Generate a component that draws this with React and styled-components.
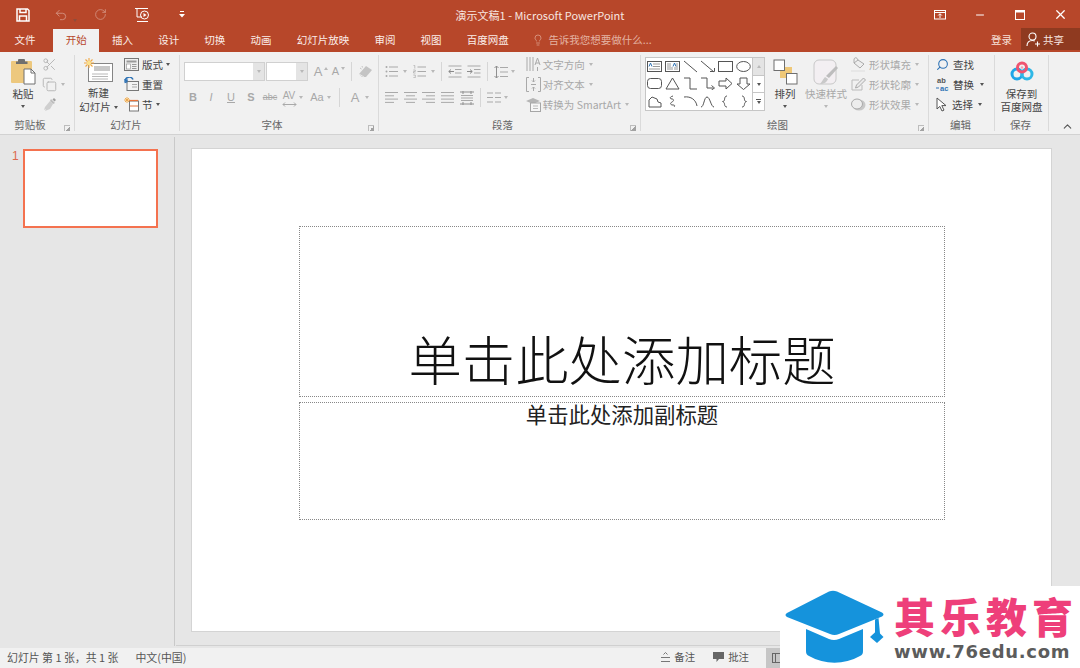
import React from 'react'
import styled, { createGlobalStyle } from 'styled-components'
import { Scissors, Copy, Search, Lightbulb, X, Minus, Undo2, RotateCw, ChevronUp } from 'lucide-react'

const CJK = '"Noto Sans CJK SC", "Noto Sans", sans-serif'

const Global = createGlobalStyle`
  html, body { margin: 0; padding: 0; height: 100%; overflow: hidden; }
  body { font-family: ${CJK}; background: #e6e6e6; }
  #root { height: 100%; }
  svg { display: block; flex: none; }
`

const Window = styled.div`
  position: relative;
  width: 1080px;
  height: 668px;
  display: flex;
  flex-direction: column;
  overflow: hidden;
`

/* title bar */
const TitleBar = styled.div`
  height: 29px;
  background: #b7472a;
  display: flex;
  align-items: center;
  color: #fff;
  flex: none;
`
const QuickAccess = styled.div`
  width: 360px;
  display: flex;
  align-items: center;
  padding-left: 16px;
  box-sizing: border-box;
`
const QuickBtn = styled.div`
  margin-left: ${p => p.$gap || 0}px;
  opacity: ${p => (p.$off ? 0.4 : 1)};
`
const TitleText = styled.div`
  width: 360px;
  text-align: center;
  font-size: 11px;
  color: #f7e6e0;
`
const WinButtons = styled.div`
  flex: 1;
  display: flex;
  align-items: center;
  justify-content: flex-end;
`
const WinBtn = styled.div`
  width: 40px;
  display: flex;
  justify-content: center;
`

/* tabs */
const TabBar = styled.div`
  height: 23px;
  background: #b7472a;
  display: flex;
  align-items: stretch;
  padding-left: 2px;
  flex: none;
`
const Tab = styled.div`
  padding: 0 12.6px;
  font-size: 10.5px;
  line-height: 21px;
  color: ${p => (p.$active ? '#b7472a' : '#fbeee9')};
  background: ${p => (p.$active ? '#f1f1f1' : 'transparent')};
  margin-left: ${p => p.$gap || 0}px;
  white-space: nowrap;
`
const TellMe = styled.div`
  display: flex;
  align-items: center;
  gap: 4px;
  margin-left: 11px;
  height: 21px;
  font-size: 10.5px;
  color: #e4b3a3;
`
const Login = styled.div`
  margin-left: auto;
  font-size: 10.5px;
  line-height: 21px;
  color: #f7e0d8;
  margin-right: 9px;
`
const Share = styled.div`
  width: 59px;
  height: 22px;
  background: #8f3a20;
  color: #f7e6e0;
  font-size: 10.5px;
  display: flex;
  align-items: center;
  gap: 2px;
  padding-left: 5px;
  box-sizing: border-box;
  margin-top: -1px;
`

/* ribbon */
const Ribbon = styled.div`
  height: 82px;
  background: #f1f1f1;
  border-bottom: 1px solid #d2d2d2;
  display: flex;
  flex: none;
`
const Group = styled.div`
  width: ${p => p.$w}px;
  box-sizing: border-box;
  margin: 3px 0;
  border-right: 1px solid #dadada;
  display: flex;
  flex-direction: column;
  position: relative;
  flex: none;
`
const GroupBody = styled.div`
  flex: 1;
  display: flex;
  padding-left: ${p => p.$pl || 0}px;
  min-height: 0;
`
const GroupLabel = styled.div`
  height: 13px;
  line-height: 13px;
  font-size: 10.5px;
  color: #666;
  text-align: center;
  padding-right: ${p => (p.$launch ? 14 : 2)}px;
`
const Launcher = styled.div`
  position: absolute;
  right: 4px;
  bottom: 0;
  width: 5px;
  height: 5px;
  border-left: 1px solid #bdbdbd;
  border-top: 1px solid #bdbdbd;
  background: linear-gradient(135deg, transparent 50%, #a2a2a2 50%);
`
const Large = styled.div`
  width: ${p => p.$w}px;
  display: flex;
  flex-direction: column;
  align-items: center;
  padding-top: ${p => p.$top || 3}px;
  margin-left: ${p => p.$ml || 0}px;
  font-size: 10.5px;
  line-height: 14px;
  color: ${p => (p.$off ? '#a8a8a8' : '#444')};
  white-space: nowrap;
  flex: none;
`
const LargeText = styled.div`
  display: flex;
  align-items: center;
  gap: 3px;
  margin-top: ${p => p.$mt || 0}px;
`
const Col = styled.div`
  display: flex;
  flex-direction: column;
  flex: none;
  margin-left: ${p => p.$ml || 0}px;
`
const SideCol = styled(Col)`
  margin-left: auto;
  margin-right: 11px;
`
const SmallRow = styled.div`
  height: 18px;
  padding-bottom: 2px;
  display: flex;
  align-items: center;
  gap: ${p => p.$gap ?? 3}px;
  font-size: 10.5px;
  color: ${p => (p.$off ? '#a8a8a8' : '#444')};
  white-space: nowrap;
`
const Caret = styled.span`
  display: inline-block;
  width: 0;
  height: 0;
  border-left: 2.5px solid transparent;
  border-right: 2.5px solid transparent;
  border-top: ${p => (p.$up ? 'none' : `3px solid ${p.$off ? '#b8b8b8' : '#555'}`)};
  border-bottom: ${p => (p.$up ? `3px solid ${p.$off ? '#b8b8b8' : '#555'}` : 'none')};
  margin-left: ${p => p.$ml || 0}px;
  margin-top: ${p => p.$mt || 0}px;
  flex: none;
`
const FontRow = styled.div`
  display: flex;
  align-items: center;
  height: 19px;
  margin-top: ${p => p.$mt || 0}px;
`
const Combo = styled.div`
  width: ${p => p.$w}px;
  height: 19px;
  background: #fff;
  border: 1px solid #d0d0d0;
  box-sizing: border-box;
  display: flex;
  justify-content: flex-end;
  margin-right: ${p => p.$mr || 0}px;
`
const ComboArrow = styled.div`
  width: 11px;
  background: #e4e4e4;
  display: flex;
  align-items: center;
  justify-content: center;
`
const Glyph = styled.div`
  width: ${p => p.$w || 18}px;
  text-align: center;
  font-family: "Liberation Sans", sans-serif;
  font-size: ${p => p.$size || 11}px;
  line-height: 13px;
  font-weight: ${p => (p.$bold ? 700 : 400)};
  font-style: ${p => (p.$italic ? 'italic' : 'normal')};
  text-decoration: ${p => (p.$under ? 'underline' : p.$strike ? 'line-through' : 'none')};
  color: #a8a8a8;
  margin-left: ${p => p.$ml || 0}px;
  flex: none;
`
const Spacing = styled.div`
  display: flex;
  flex-direction: column;
  align-items: center;
  width: 16px;
  margin-left: ${p => p.$ml || 0}px;
  flex: none;
`
const VSep = styled.div`
  width: 1px;
  height: ${p => p.$h || 19}px;
  background: #d6d6d6;
  margin: 0 ${p => p.$m || 4}px;
  flex: none;
`
const IconSlot = styled.div`
  margin-left: ${p => p.$ml || 0}px;
  flex: none;
`
const Gallery = styled.div`
  display: flex;
  height: 54px;
  margin-top: 2px;
`
const GalleryGrid = styled.div`
  width: 108px;
  box-sizing: border-box;
  background: #fff;
  border: 1px solid #c6c6c6;
  display: grid;
  grid-template-columns: repeat(6, 1fr);
  grid-template-rows: repeat(3, 1fr);
`
const GalleryCell = styled.div`
  display: flex;
  align-items: center;
  justify-content: center;
`
const GalleryScroll = styled.div`
  width: 12px;
  display: flex;
  flex-direction: column;
  border: 1px solid #c6c6c6;
  border-left: none;
  box-sizing: border-box;
`
const ScrollBtn = styled.div`
  flex: 1;
  background: ${p => (p.$off ? '#e4e4e4' : '#fff')};
  border-bottom: ${p => (p.$last ? 'none' : '1px solid #c6c6c6')};
  display: flex;
  flex-direction: column;
  gap: 1px;
  align-items: center;
  justify-content: center;
`
const ScrollBar = styled.div`
  width: 5px;
  height: 1px;
  background: #555;
`
const Collapse = styled.div`
  flex: 1;
  display: flex;
  align-items: flex-end;
  justify-content: flex-end;
  padding: 0 6px 1px 0;
`

/* main */
const Main = styled.div`
  flex: 1;
  display: flex;
  min-height: 0;
  background: #e6e6e6;
`
const Thumbs = styled.div`
  width: 175px;
  box-sizing: border-box;
  border-right: 1px solid #c9c9c9;
  margin: 2px 0;
  padding: 12px 0 0 12px;
  display: flex;
  flex: none;
`
const ThumbNumber = styled.div`
  width: 11px;
  font-family: "Liberation Sans", sans-serif;
  font-size: 12px;
  line-height: 14px;
  color: #dc6a4c;
`
const Thumb = styled.div`
  width: 135px;
  height: 79px;
  box-sizing: border-box;
  border: 2.5px solid #f4724f;
  background: #fff;
`
const Canvas = styled.div`
  flex: 1;
  box-sizing: border-box;
  padding: 13px 28px 14px 15px;
  border-bottom: 1px solid #d0d0d0;
  margin: 0 0 2px 1px;
`
const Slide = styled.div`
  width: 861px;
  height: 484px;
  box-sizing: border-box;
  background: #fff;
  border: 1px solid #d4d4d4;
  padding: 77px 106px 0 107px;
  display: flex;
  flex-direction: column;
  gap: 5px;
`
const TitleHolder = styled.div`
  height: 171px;
  box-sizing: border-box;
  border: 1px dotted #888;
  display: flex;
  align-items: flex-end;
  justify-content: center;
  font-size: 53.4px;
  font-weight: 300;
  line-height: 72px;
  color: #111;
  padding-bottom: 2px;
  white-space: nowrap;
`
const SubHolder = styled.div`
  height: 118px;
  box-sizing: border-box;
  border: 1px dotted #888;
  text-align: center;
  font-size: 21.4px;
  line-height: 22px;
  color: #222;
`

/* status */
const StatusBar = styled.div`
  height: 20px;
  background: #f1f1f1;
  display: flex;
  align-items: center;
  font-size: 10.9px;
  color: #555;
  padding: 0 0 3px 7px;
  box-sizing: border-box;
  flex: none;
`
const StatusItem = styled.div`
  display: flex;
  align-items: center;
  gap: 4px;
  margin-left: ${p => p.$ml || 0}px;
  white-space: nowrap;
`
const StatusAction = styled(StatusItem)`
  font-size: 10.4px;
`
const ViewBtn = styled.div`
  width: 32px;
  height: 20px;
  background: #c6c6c6;
  margin: 3px 0 0 17px;
  display: flex;
  align-items: center;
  padding-left: 6px;
  box-sizing: border-box;
`

/* watermark */
const Watermark = styled.div`
  position: absolute;
  right: 0;
  bottom: 0;
  width: 300px;
  height: 82px;
  background: #fff;
  display: flex;
  align-items: center;
`
const WatermarkCap = styled.div`
  margin-left: 5px;
`
const WatermarkText = styled.div`
  margin-left: 9px;
  display: flex;
  flex-direction: column;
`
const WatermarkName = styled.div`
  font-size: 41px;
  line-height: 46px;
  font-weight: 900;
  letter-spacing: 5px;
  color: #ee3f7a;
  white-space: nowrap;
  margin-bottom: 3px;
`
const WatermarkUrl = styled.div`
  font-family: "DejaVu Sans", sans-serif;
  font-size: 18px;
  line-height: 22px;
  font-weight: 700;
  letter-spacing: 0.7px;
  color: #5c5c5c;
  white-space: nowrap;
`

const G = '#a9a9a9'

const SaveIcon = () => (
  <svg width="14" height="14" viewBox="0 0 14 14" fill="none" stroke="#fff" strokeWidth="1.5">
    <path d="M1 1h10.5L13 2.5V13H1z" />
    <path d="M4 1v3.5h6V1M3.5 13V8h7v5" />
  </svg>
)
const PresentIcon = () => (
  <svg width="18" height="16" viewBox="0 0 18 16" fill="none" stroke="#fff" strokeWidth="1">
    <path d="M1 1.5h13M3 1.5V10h5" />
    <circle cx="10.5" cy="8" r="4" />
    <path d="M9.5 6l3 2-3 2z" fill="#fff" stroke="none" />
    <path d="M3 14.5h11" />
  </svg>
)
const QatMore = () => (
  <svg width="6" height="7" viewBox="0 0 6 7" fill="#fff">
    <rect x="1" y="0" width="4" height="1" />
    <path d="M0 3h6L3 6.5z" />
  </svg>
)
const DisplayIcon = () => (
  <svg width="12" height="10" viewBox="0 0 12 10" fill="none" stroke="#fff">
    <rect x=".5" y=".5" width="11" height="8.5" />
    <path d="M.5 2.5h11" />
    <path d="M6 8V4M4.2 5.5L6 3.7l1.8 1.8" />
  </svg>
)
const MaxIcon = () => (
  <svg width="10" height="10" viewBox="0 0 10 10" fill="none" stroke="#fff">
    <rect x=".5" y=".5" width="9" height="9" />
    <path d="M0 1.5h10" strokeWidth="2" />
  </svg>
)
const ShareIcon = () => (
  <svg width="15" height="15" viewBox="0 0 15 15" fill="none" stroke="#fff" strokeWidth="1.1">
    <circle cx="6.5" cy="4.5" r="3.5" />
    <path d="M1 14c0-3.5 2-5.5 5.5-5.5 1 0 1.6.2 2.3.5" />
    <path d="M11.5 9.5v5M9 12h5" />
  </svg>
)
const PasteIcon = () => (
  <svg width="26" height="27" viewBox="0 0 26 27">
    <rect x="1" y="3" width="21" height="22" rx="1" fill="#edc87e" />
    <path d="M8 3.5V2a1 1 0 011-1h5a1 1 0 011 1v1.5h2.5V6H6V3.5z" fill="#6f6f6f" />
    <path d="M14 11h7l4 4v11H14z" fill="#fff" stroke="#707070" />
    <path d="M21 11v4h4" fill="none" stroke="#707070" />
  </svg>
)
const BrushIcon = () => (
  <svg width="15" height="15" viewBox="0 0 15 15">
    <path d="M9 2l4 4-2 1-3-3z" fill="#bdbdbd" />
    <path d="M8 4l3 3-3 5-5 2 1-2-2 1 1-3z" fill="#cfcfcf" />
    <path d="M12 1l2 2-1.5 1.5-2-2z" fill="#9f9f9f" />
  </svg>
)
const NewSlideIcon = () => (
  <svg width="30" height="25" viewBox="0 0 30 25">
    <rect x="4.5" y="5.5" width="24" height="18" fill="#fff" stroke="#858585" />
    <rect x="10" y="8" width="16" height="5" fill="#c8c8c8" />
    <path d="M8 16h16M8 18.5h16M8 21h16" stroke="#b8b8b8" />
    <path d="M5 0v10M0 5h10M1.5 1.5l7 7M8.5 1.5l-7 7" stroke="#f0a640" strokeWidth="1.1" />
    <circle cx="5" cy="5" r="2.2" fill="#fbe08c" />
  </svg>
)
const LayoutIcon = () => (
  <svg width="15" height="13" viewBox="0 0 15 13" fill="none">
    <rect x=".5" y=".5" width="14" height="12" fill="#eee" stroke="#777" />
    <rect x="2.5" y="2.5" width="10" height="2" fill="#999" />
    <rect x="2.5" y="6" width="4" height="5" fill="#fff" stroke="#999" strokeWidth=".7" />
    <path d="M8 6.5h4.5M8 8.5h4.5M8 10.5h4.5" stroke="#999" />
  </svg>
)
const ResetIcon = () => (
  <svg width="15" height="14" viewBox="0 0 15 14" fill="none">
    <rect x="3" y="4.5" width="11.5" height="9" fill="#f4f4f4" stroke="#777" />
    <path d="M8 7.5h5M8 10h5" stroke="#aaa" />
    <path d="M1.5 6A4 4 0 019 2.5" stroke="#2f73b5" strokeWidth="1.6" />
    <path d="M0 2l4 .5-1 4z" fill="#2f73b5" />
  </svg>
)
const SectionIcon = () => (
  <svg width="15" height="15" viewBox="0 0 15 15" fill="none">
    <rect x="5.5" y="4" width="9" height="10" fill="#fff" stroke="#777" />
    <path d="M5 3.5h9" stroke="#e8743b" strokeWidth="1.2" />
    <path d="M6 9h8" stroke="#e8743b" />
    <path d="M3 0v6M0 3h6M1 1l4 4M5 1L1 5" stroke="#f0a640" strokeWidth=".9" />
  </svg>
)
const ClearFmt = () => (
  <svg width="15" height="15" viewBox="0 0 15 15">
    <path d="M1 10L8 2l6 4-6 7H4z" fill="#c4c4c4" />
    <path d="M1 10l5 3" stroke="#e9e9e9" />
    <path d="M2 4l1.5 1M4 2l.5 1.500" stroke="#c4c4c4" />
  </svg>
)
const SpaceArrow = () => (
  <svg width="15" height="5" viewBox="0 0 15 5" fill="none" stroke={G}>
    <path d="M1 2.5h13M3 .5l-2 2 2 2M12 .5l2 2-2 2" />
  </svg>
)
const Bullets = () => (
  <svg width="13" height="13" viewBox="0 0 13 13" stroke={G}>
    <path d="M4 2h9M4 6.5h9M4 11h9" />
    <circle cx="1.5" cy="2" r="1" fill={G} stroke="none" />
    <circle cx="1.5" cy="6.5" r="1" fill={G} stroke="none" />
    <circle cx="1.5" cy="11" r="1" fill={G} stroke="none" />
  </svg>
)
const Numbers = () => (
  <svg width="13" height="13" viewBox="0 0 13 13" stroke={G}>
    <path d="M4.5 2h8.5M4.5 6.5h8.5M4.5 11h8.5" />
    <path d="M.5.5h1.3v3M.3 5h2v1.5H.5V8h2M.3 10h2v2.700H.3" fill="none" strokeWidth=".7" />
  </svg>
)
const LineSpacing = () => (
  <svg width="14" height="14" viewBox="0 0 14 14" stroke={G} fill="none">
    <path d="M6 2.5h8M6 7h8M6 11.5h8" />
    <path d="M2.5 1v12M.5 3l2-2 2 2M.5 11l2 2 2-2" stroke="#8f8f8f" />
  </svg>
)
const Indent = ({ flip }) => (
  <svg width="14" height="13" viewBox="0 0 14 13" stroke={G} fill="none">
    <path d="M.5 1h13M.5 12h13M7 4.5h6.5M7 8h6.5" />
    {flip
      ? <path d="M0 6.5h5M3 4.5l2.300 2-2.300 2" stroke="#8a8a8a" />
      : <path d="M6 6.5H1M3 4.5l-2.300 2 2.300 2" stroke="#8a8a8a" />}
  </svg>
)
const Align = ({ lines }) => (
  <svg width="13" height="11" viewBox="0 0 13 11" stroke={G} fill="none">
    {lines.map((l, i) => <path key={i} d={`M${l[0]} ${i * 3.3 + 0.5}H${l[1]}`} />)}
  </svg>
)
const ColumnsIcon = () => (
  <svg width="14" height="14" viewBox="0 0 14 14" stroke={G} fill="none">
    <path d="M0 1h14M0 13h14" stroke="#8f8f8f" />
    <path d="M3 0v3M11 0v3M3 11v3M11 11v3" stroke="#8f8f8f" />
    <path d="M1 4.5h12M1 7h12M1 9.5h12" />
  </svg>
)
const ColsIcon = () => (
  <svg width="14" height="11" viewBox="0 0 14 11" stroke={G} fill="none">
    <path d="M0 1h6M0 5.5h6M0 10h6M8 1h6M8 5.5h6M8 10h6" />
  </svg>
)
const TextDirIcon = () => (
  <svg width="15" height="16" viewBox="0 0 15 16" stroke={G} fill="none">
    <path d="M1 1v14M4 1v14M7 1v14" />
    <path d="M9 9l2.500-7L14 9M10 7h3M11.500 11v4" />
  </svg>
)
const AlignTextIcon = () => (
  <svg width="15" height="15" viewBox="0 0 15 15" stroke={G} fill="none">
    <path d="M3 .5H.5v14H3M12 .5h2.500v14H12" />
    <path d="M5 7.5h5M7.5 1v4M6 3.5L7.5 5 9 3.500M7.5 14v-4M6 11.500L7.500 10 9 11.500" />
  </svg>
)
const SmartArtIcon = () => (
  <svg width="15" height="15" viewBox="0 0 15 15">
    <path d="M0 4l7-3 7 3-7 3z" fill="#b5b5b5" />
    <rect x="4.5" y="6" width="10" height="8.5" fill="#f6f6f6" stroke="#a6a6a6" />
    <path d="M7 9h5M7 11.5h5" stroke="#bbb" />
  </svg>
)
const ArrangeIcon = () => (
  <svg width="25" height="26" viewBox="0 0 25 26">
    <rect x="7" y="8" width="12" height="11" fill="#efc878" />
    <rect x="1" y="1" width="10.5" height="10.5" fill="#fff" stroke="#6f6f6f" />
    <rect x="13.5" y="14.5" width="10.5" height="10.5" fill="#fff" stroke="#6f6f6f" />
  </svg>
)
const QuickStyleIcon = () => (
  <svg width="26" height="26" viewBox="0 0 26 26" fill="none">
    <rect x="1" y="1" width="22" height="24" rx="5" fill="#f3eff2" stroke="#c8c8c8" />
    <path d="M23 7l2 2-9 10-3-2z" fill="#bdbdbd" />
    <path d="M12 18l3 2c-1 3-4 5-8 5 2-2 3-5 5-7z" fill="#c9c9c9" />
  </svg>
)
const FillIcon = () => (
  <svg width="15" height="15" viewBox="0 0 15 15" fill="none">
    <path d="M3 6l4-3 6 4-4 4z" fill="#eee" stroke="#aaa" />
    <path d="M7 3c-1-3-4-3-4 0v3" stroke="#aaa" />
    <path d="M0 14h14" stroke="#e3e3e3" strokeWidth="1.5" />
  </svg>
)
const OutlineIcon = () => (
  <svg width="15" height="14" viewBox="0 0 15 14" fill="none">
    <path d="M1 3v10h10" stroke="#bbb" />
    <path d="M1 3h7M11 8v5" stroke="#bbb" />
    <path d="M12.5 1l2 2-7 7-3 1 1-3z" fill="#e9e9e9" stroke="#aaa" />
  </svg>
)
const EffectIcon = () => (
  <svg width="15" height="13" viewBox="0 0 15 13">
    <ellipse cx="8" cy="7" rx="6.5" ry="5.5" fill="#c8c8c8" />
    <ellipse cx="6" cy="6" rx="5.5" ry="5" fill="#ededed" stroke="#aaa" />
  </svg>
)
const ReplaceIcon = () => (
  <svg width="15" height="16" viewBox="0 0 15 16" fontFamily="Liberation Sans" fontWeight="700">
    <text x="1" y="6.5" fontSize="7.5" fill="#555">ab</text>
    <text x="4" y="15" fontSize="7.5" fill="#2f73b5">ac</text>
    <path d="M0 12h3" stroke="#2f73b5" />
  </svg>
)
const CursorIcon = () => (
  <svg width="11" height="15" viewBox="0 0 11 15" fill="#fff" stroke="#555" strokeLinejoin="round">
    <path d="M1 1v11l2.800-2.600L6 14l2-.9-2.200-4.500H10z" />
  </svg>
)
const BaiduIcon = () => (
  <svg width="24" height="20" viewBox="0 0 24 20" fill="none" strokeWidth="3">
    <circle cx="7" cy="13" r="5" stroke="#1fa5e8" />
    <circle cx="17" cy="13" r="5" stroke="#2fb7e6" />
    <circle cx="12" cy="6.5" r="4.5" stroke="#ef5470" />
    <circle cx="12" cy="6.5" r="1.2" fill="#f7a0b0" stroke="none" />
  </svg>
)
const NotesIcon = () => (
  <svg width="9" height="10" viewBox="0 0 9 10" stroke="#777" fill="none">
    <path d="M2.5 2.5L4.500 .5l2 2M0 5.500h9M0 9.500h9" />
  </svg>
)
const CommentIcon = () => (
  <svg width="11" height="10" viewBox="0 0 11 10" fill="#666">
    <path d="M0 0h11v7H6L3.5 10V7H0z" />
  </svg>
)
const NormalViewIcon = () => (
  <svg width="10" height="10" viewBox="0 0 10 10" fill="none" stroke="#666">
    <rect x=".5" y=".5" width="9" height="9" />
    <path d="M3.5 .5v9" />
  </svg>
)
const CapLogo = () => (
  <svg width="100" height="76" viewBox="0 0 100 76" fill="#1593dc">
    <path d="M44 2.500a10 10 0 018 0l45 21c2 1 2 3 0 4L54 45a12 12 0 01-9 0L2 28c-2-1-2-3 0-4z" />
    <path d="M21 40l23 10a14 14 0 0010 0l24-10v22c0 3-1 4-3 5-16 9-35 9-51 0-2-1-3-2-3-5z" />
    <path d="M90 30.500l3.500-1.500 1.500 16h-5z" />
    <path d="M92 41.500l6.500 6.500-6.500 6-7-6z" />
  </svg>
)

const shapeProps = { width: 15, height: 13, viewBox: '0 0 15 13', fill: 'none', stroke: '#555' }
const shapes = [
  <svg {...shapeProps}><rect x=".5" y="1.5" width="14" height="10" /><path d="M2 6.500L3.500 3 5 6.500" stroke="#2f73b5" /><path d="M6 4h7M6 6.500h7M2 9h11" stroke="#999" /></svg>,
  <svg {...shapeProps}><rect x=".5" y="1.5" width="14" height="10" /><path d="M8 6.500L9.500 3 11 6.500" stroke="#2f73b5" /><path d="M3 3v7M5 3v7M7 7v3M10 7v3M12 3v7" stroke="#999" /></svg>,
  <svg {...shapeProps}><path d="M1 1l13 11" /></svg>,
  <svg {...shapeProps}><path d="M1 1l13 11M10 11.500h4.500V8" /></svg>,
  <svg {...shapeProps}><rect x=".5" y="1.5" width="14" height="10" /></svg>,
  <svg {...shapeProps}><ellipse cx="7.5" cy="6.5" rx="6.8" ry="5" /></svg>,
  <svg {...shapeProps}><rect x=".5" y="1.5" width="14" height="10" rx="3" /></svg>,
  <svg {...shapeProps}><path d="M7.500 1L14 12H1z" /></svg>,
  <svg {...shapeProps}><path d="M1 1h6v11h7" /></svg>,
  <svg {...shapeProps}><path d="M1 1h6v10h6M11.500 8.500l3 2.500-3 2" /></svg>,
  <svg {...shapeProps}><path d="M1 4h7V1l6 5.500-6 5.500V9H1z" /></svg>,
  <svg {...shapeProps}><path d="M4 1h7v6h3l-6.500 5.500L1 7h3z" /></svg>,
  <svg {...shapeProps}><path d="M2 12V5l3-3 5 2 1 3 3 1v4z" /></svg>,
  <svg {...shapeProps}><path d="M8 1C4 2 5 4 7 4s2 2 0 3-2 3 1 3 1 2 1 2" /></svg>,
  <svg {...shapeProps}><path d="M1 2c7-1 12 3 13 9" /></svg>,
  <svg {...shapeProps}><path d="M1 12C4 12 4 2 7 2s4 10 7 10" /></svg>,
  <svg {...shapeProps}><path d="M9 1C6 1 7 5 6 6c-.5.5-1.500.5-1.500.5S5.500 7 6 7.500C7 9 6 12 9 12" /></svg>,
  <svg {...shapeProps}><path d="M6 1c3 0 2 4 3 5 .5.5 1.500.5 1.500.5s-1 .5-1.500 1C8 9 9 12 6 12" /></svg>,
]

const Ic = { size: 15, color: '#b0b0b0', strokeWidth: 1.4 }

const App = () => (
  <Window>
    <Global />
    <TitleBar>
      <QuickAccess>
        <SaveIcon />
        <QuickBtn $gap={24} $off><Undo2 size={14} color="#fff" strokeWidth={1.6} /></QuickBtn>
        <QuickBtn $gap={5} $off><Caret /></QuickBtn>
        <QuickBtn $gap={17} $off><RotateCw size={13} color="#fff" strokeWidth={1.6} /></QuickBtn>
        <QuickBtn $gap={27}><PresentIcon /></QuickBtn>
        <QuickBtn $gap={27}><QatMore /></QuickBtn>
      </QuickAccess>
      <TitleText>演示文稿1 - Microsoft PowerPoint</TitleText>
      <WinButtons>
        <WinBtn><DisplayIcon /></WinBtn>
        <WinBtn><Minus size={12} color="#fff" strokeWidth={2} /></WinBtn>
        <WinBtn><MaxIcon /></WinBtn>
        <WinBtn><X size={15} color="#fff" strokeWidth={2} /></WinBtn>
      </WinButtons>
    </TitleBar>

    <TabBar>
      <Tab>文件</Tab>
      <Tab $active $gap={5}>开始</Tab>
      <Tab>插入</Tab>
      <Tab>设计</Tab>
      <Tab>切换</Tab>
      <Tab>动画</Tab>
      <Tab>幻灯片放映</Tab>
      <Tab>审阅</Tab>
      <Tab>视图</Tab>
      <Tab>百度网盘</Tab>
      <TellMe>
        <Lightbulb size={12} color="#e4b3a3" strokeWidth={1.3} />
        告诉我您想要做什么...
      </TellMe>
      <Login>登录</Login>
      <Share><ShareIcon />共享</Share>
    </TabBar>

    <Ribbon>
      <Group $w={75}>
        <GroupBody $pl={10}>
          <Large $w={26}>
            <PasteIcon />
            <LargeText $mt={2}>粘贴</LargeText>
            <Caret $mt={4} />
          </Large>
          <Col $ml={6}>
            <SmallRow><Scissors {...Ic} /></SmallRow>
            <SmallRow $gap={4}><Copy {...Ic} /><Caret $off /></SmallRow>
            <SmallRow><BrushIcon /></SmallRow>
          </Col>
        </GroupBody>
        <GroupLabel $launch>剪贴板</GroupLabel>
        <Launcher />
      </Group>

      <Group $w={105}>
        <GroupBody $pl={4}>
          <Large $w={39}>
            <NewSlideIcon />
            <LargeText $mt={3}>新建</LargeText>
            <LargeText>幻灯片<Caret /></LargeText>
          </Large>
          <Col $ml={6}>
            <SmallRow><LayoutIcon />版式<Caret /></SmallRow>
            <SmallRow><ResetIcon />重置</SmallRow>
            <SmallRow><SectionIcon />节<Caret /></SmallRow>
          </Col>
        </GroupBody>
        <GroupLabel>幻灯片</GroupLabel>
      </Group>

      <Group $w={199}>
        <GroupBody $pl={4}>
          <Col>
            <FontRow $mt={7}>
              <Combo $w={81} $mr={1}><ComboArrow><Caret $off /></ComboArrow></Combo>
              <Combo $w={42}><ComboArrow><Caret $off /></ComboArrow></Combo>
              <Glyph $size={13} $w={10} $ml={5}>A</Glyph>
              <Caret $off $up $ml={1} $mt={-7} />
              <Glyph $size={11} $w={9} $ml={3}>A</Glyph>
              <Caret $off $ml={1} $mt={-7} />
              <VSep $m={6} />
              <IconSlot><ClearFmt /></IconSlot>
            </FontRow>
            <FontRow $mt={7}>
              <Glyph $bold>B</Glyph>
              <Glyph $italic>I</Glyph>
              <Glyph $under $ml={2}>U</Glyph>
              <Glyph $bold $ml={2}>S</Glyph>
              <Glyph $strike $size={9} $ml={1}>abc</Glyph>
              <Spacing $ml={2}>
                <Glyph $size={10} $w={16}>AV</Glyph>
                <SpaceArrow />
              </Spacing>
              <Caret $off $ml={2} />
              <Glyph $size={11} $ml={5}>Aa</Glyph>
              <Caret $off $ml={1} />
              <VSep $m={8} />
              <Glyph $size={13} $w={12} $ml={1}>A</Glyph>
              <Caret $off $ml={4} />
            </FontRow>
          </Col>
        </GroupBody>
        <GroupLabel $launch>字体</GroupLabel>
        <Launcher />
      </Group>

      <Group $w={262}>
        <GroupBody $pl={6}>
          <Col>
            <FontRow $mt={7}>
              <Bullets /><Caret $off $ml={5} />
              <IconSlot $ml={6}><Numbers /></IconSlot><Caret $off $ml={5} />
              <VSep $m={6} />
              <IconSlot><Indent /></IconSlot>
              <IconSlot $ml={5}><Indent flip /></IconSlot>
              <VSep $m={6} />
              <IconSlot><LineSpacing /></IconSlot><Caret $off $ml={3} />
            </FontRow>
            <FontRow $mt={7}>
              <Align lines={[[0, 13], [0, 9], [0, 13], [0, 9]]} />
              <IconSlot $ml={6}><Align lines={[[0, 13], [2, 11], [0, 13], [2, 11]]} /></IconSlot>
              <IconSlot $ml={5}><Align lines={[[0, 13], [4, 13], [0, 13], [4, 13]]} /></IconSlot>
              <IconSlot $ml={6}><Align lines={[[0, 13], [0, 13], [0, 13], [0, 13]]} /></IconSlot>
              <IconSlot $ml={6}><ColumnsIcon /></IconSlot>
              <VSep $m={6} />
              <ColsIcon /><Caret $off $ml={3} />
            </FontRow>
          </Col>
          <SideCol>
            <SmallRow $off $gap={2}><TextDirIcon />文字方向<Caret $off $ml={2} /></SmallRow>
            <SmallRow $off $gap={2}><AlignTextIcon />对齐文本<Caret $off $ml={2} /></SmallRow>
            <SmallRow $off $gap={2}><SmartArtIcon />转换为 SmartArt<Caret $off $ml={2} /></SmallRow>
          </SideCol>
        </GroupBody>
        <GroupLabel $launch>段落</GroupLabel>
        <Launcher />
      </Group>

      <Group $w={288}>
        <GroupBody $pl={4}>
          <Gallery>
            <GalleryGrid>
              {shapes.map((s, i) => <GalleryCell key={i}>{s}</GalleryCell>)}
            </GalleryGrid>
            <GalleryScroll>
              <ScrollBtn $off><Caret $off $up /></ScrollBtn>
              <ScrollBtn><Caret /></ScrollBtn>
              <ScrollBtn $last><ScrollBar /><Caret /></ScrollBtn>
            </GalleryScroll>
          </Gallery>
          <Large $w={24} $top={4} $ml={8}>
            <ArrangeIcon />
            <LargeText $mt={2}>排列</LargeText>
            <Caret $mt={4} />
          </Large>
          <Large $w={44} $top={4} $off $ml={7}>
            <QuickStyleIcon />
            <LargeText $mt={2}>快速样式</LargeText>
            <Caret $off $mt={4} />
          </Large>
          <Col $ml={3}>
            <SmallRow $off><FillIcon />形状填充<Caret $off $ml={1} /></SmallRow>
            <SmallRow $off><OutlineIcon />形状轮廓<Caret $off $ml={1} /></SmallRow>
            <SmallRow $off><EffectIcon />形状效果<Caret $off $ml={1} /></SmallRow>
          </Col>
        </GroupBody>
        <GroupLabel $launch>绘图</GroupLabel>
        <Launcher />
      </Group>

      <Group $w={66}>
        <GroupBody $pl={7}>
          <Col>
            <SmallRow $gap={4}><Search size={13} color="#2f73b5" strokeWidth={2} style={{ transform: 'scaleX(-1)' }} />查找</SmallRow>
            <SmallRow $gap={2}><ReplaceIcon />替换<Caret $ml={4} /></SmallRow>
            <SmallRow $gap={5}><CursorIcon />选择<Caret /></SmallRow>
          </Col>
        </GroupBody>
        <GroupLabel>编辑</GroupLabel>
      </Group>

      <Group $w={54}>
        <GroupBody>
          <Large $w={53} $top={6}>
            <BaiduIcon />
            <LargeText $mt={6}>保存到</LargeText>
            <LargeText $mt={-1}>百度网盘</LargeText>
          </Large>
        </GroupBody>
        <GroupLabel>保存</GroupLabel>
      </Group>

      <Collapse><ChevronUp size={13} color="#555" strokeWidth={2} /></Collapse>
    </Ribbon>

    <Main>
      <Thumbs>
        <ThumbNumber>1</ThumbNumber>
        <Thumb />
      </Thumbs>
      <Canvas>
        <Slide>
          <TitleHolder>单击此处添加标题</TitleHolder>
          <SubHolder>单击此处添加副标题</SubHolder>
        </Slide>
      </Canvas>
    </Main>

    <StatusBar>
      <StatusItem>幻灯片 第 1 张，共 1 张</StatusItem>
      <StatusItem $ml={17}>中文(中国)</StatusItem>
      <StatusAction $ml={475}><NotesIcon />备注</StatusAction>
      <StatusAction $ml={18}><CommentIcon />批注</StatusAction>
      <ViewBtn><NormalViewIcon /></ViewBtn>
    </StatusBar>

    <Watermark>
      <WatermarkCap><CapLogo /></WatermarkCap>
      <WatermarkText>
        <WatermarkName>其乐教育</WatermarkName>
        <WatermarkUrl>www.76edu.com</WatermarkUrl>
      </WatermarkText>
    </Watermark>
  </Window>
)

export default App
